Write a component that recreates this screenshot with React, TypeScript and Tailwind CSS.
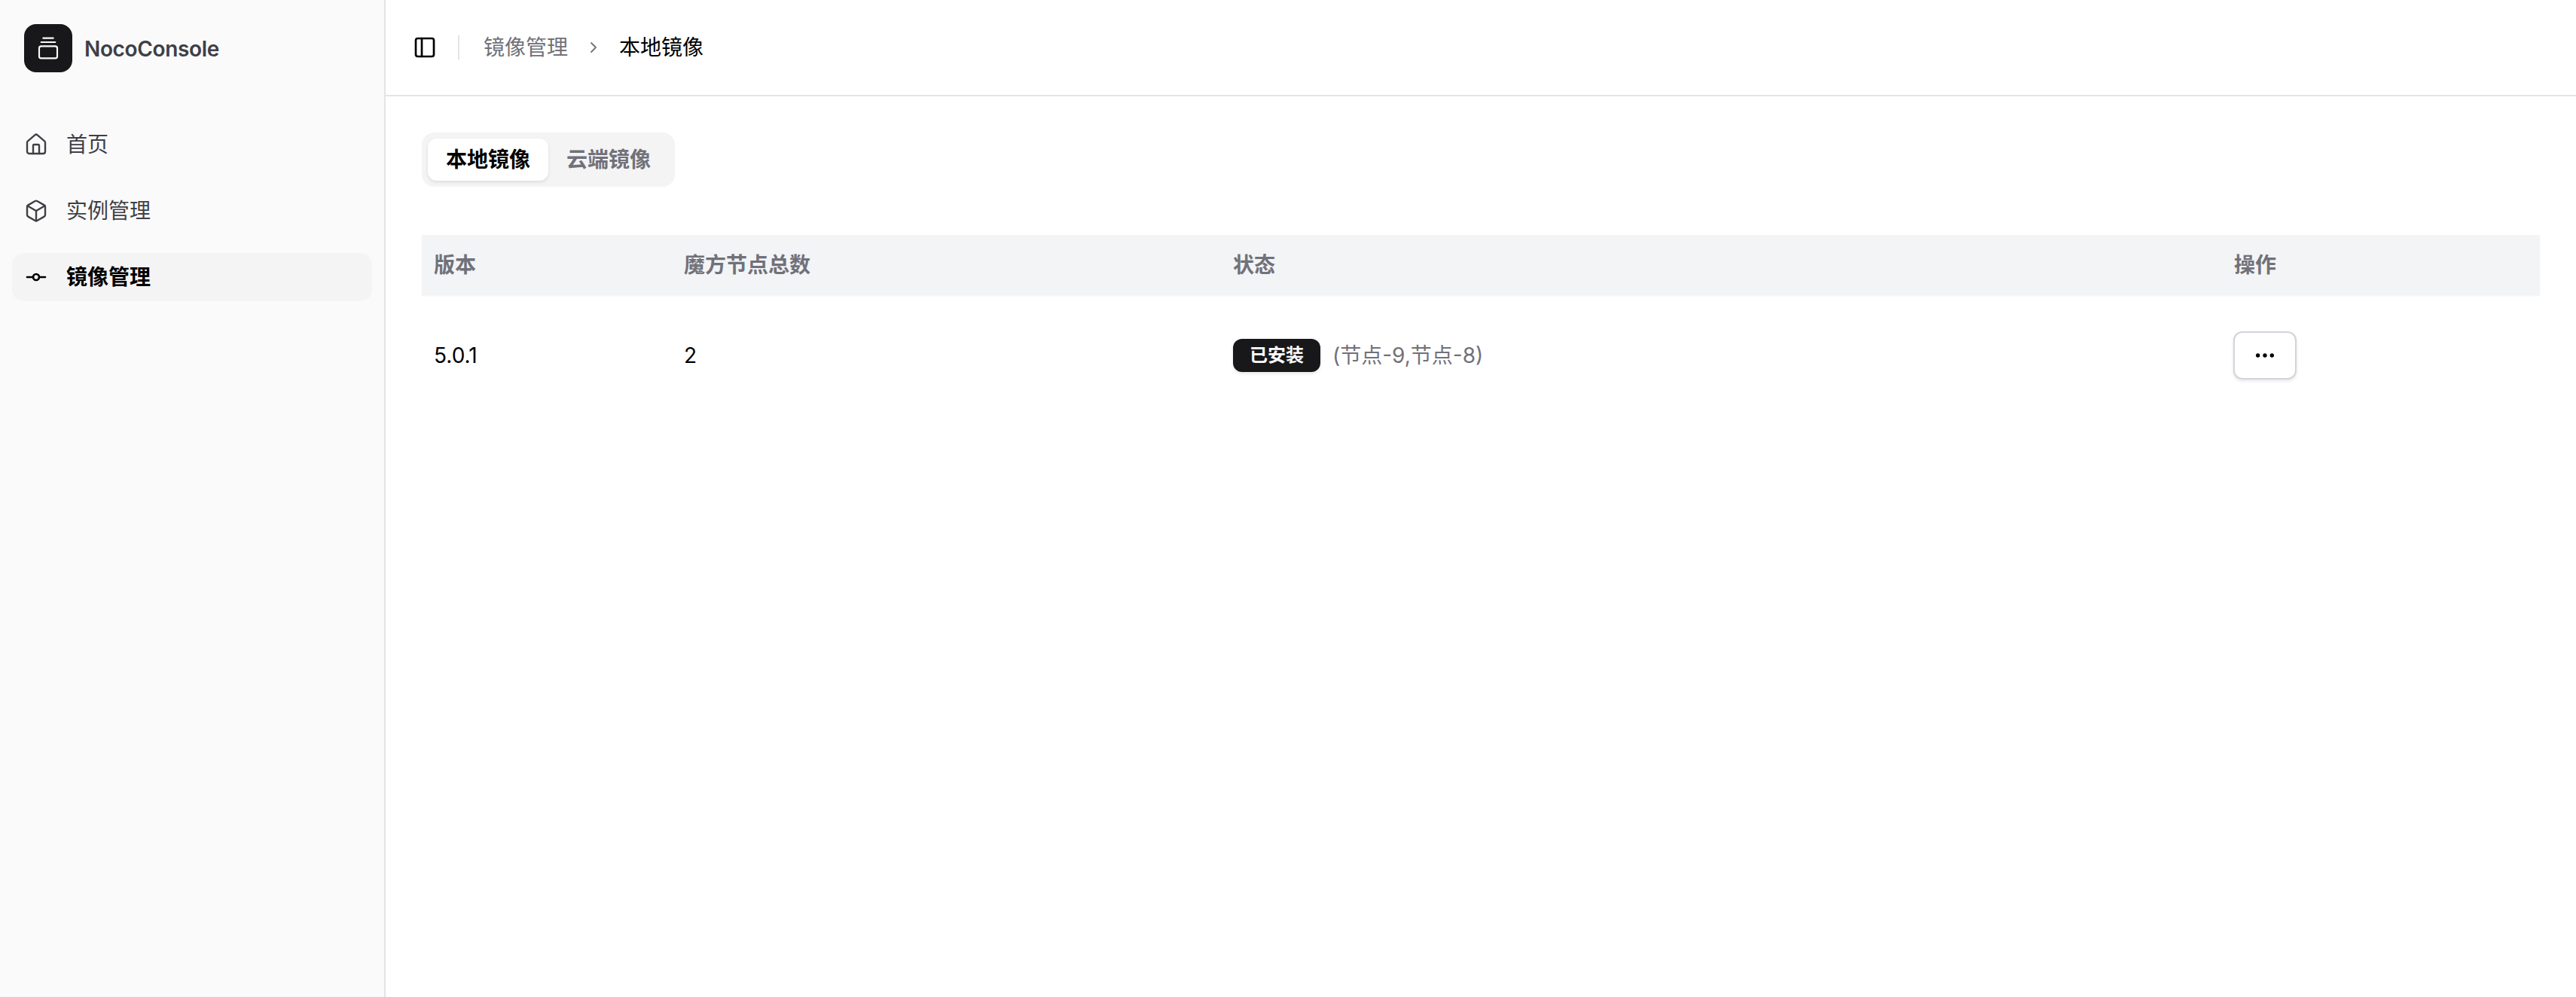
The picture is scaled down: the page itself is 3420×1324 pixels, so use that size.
import { House, Box, GitCommitHorizontal, PanelLeft, ChevronRight, Ellipsis, GalleryVerticalEnd } from "lucide-react";

const font = "font-['Inter','Noto_Sans_CJK_SC',sans-serif]";

function NavItem({ icon, label, active }: { icon: React.ReactNode; label: string; active?: boolean }) {
  return (
    <div className={`flex h-16 items-center gap-6 rounded-2xl px-4 text-[28px] ${active ? "bg-[#f4f4f5] font-semibold text-black" : "text-[#3f3f46]"}`}>
      {icon}
      <span>{label}</span>
    </div>
  );
}

export default function App() {
  return (
    <div className={`${font} flex h-[1324px] w-[3420px] bg-white text-black`}>
      <aside className="flex w-[512px] shrink-0 flex-col border-r-2 border-[#e4e4e7] bg-[#fafafa] px-4 pt-8">
        <div className="flex items-center gap-4 px-4">
          <div className="flex h-16 w-16 items-center justify-center rounded-2xl bg-[#18181b] text-[#fafafa]">
            <GalleryVerticalEnd size={32} strokeWidth={1.6} />
          </div>
          <span className="pt-0.5 text-[28px] font-semibold tracking-[-0.35px] text-[#3f3f46]">NocoConsole</span>
        </div>
        <nav className="mt-16 flex flex-col gap-6">
          <NavItem icon={<House size={32} strokeWidth={1.8} />} label="首页" />
          <NavItem icon={<Box size={32} strokeWidth={1.8} />} label="实例管理" />
          <NavItem active icon={<GitCommitHorizontal size={32} strokeWidth={2} />} label="镜像管理" />
        </nav>
      </aside>
      <main className="flex min-w-0 flex-1 flex-col">
        <header className="flex h-[128px] items-center border-b-2 border-[#e4e4e7] px-9">
          <PanelLeft size={32} strokeWidth={2} />
          <div className="ml-7 h-8 w-0.5 bg-[#e4e4e7]" />
          <span className="ml-8 text-[28px] text-[#71717a]">镜像管理</span>
          <ChevronRight size={24} strokeWidth={1.8} className="ml-[22px] text-[#71717a]" />
          <span className="ml-[22px] text-[28px] text-black">本地镜像</span>
        </header>
        <div className="flex flex-col px-12 pt-12">
          <div className="flex h-[72px] w-[336px] items-center rounded-2xl bg-[#f4f4f5] p-2">
            <div className="flex h-14 w-40 items-center justify-center rounded-xl bg-white text-[28px] font-semibold text-black shadow-[0_2px_4px_rgba(0,0,0,0.1)]">本地镜像</div>
            <div className="flex h-14 w-40 items-center justify-center text-[28px] font-semibold text-[#71717a]">云端镜像</div>
          </div>
          <div className="mt-16 w-[2812px]">
            <div className="grid h-20 grid-cols-[332px_729px_1329px_422px] items-center bg-[#f3f4f6] text-[28px] font-semibold text-[#71717a] shadow-[0_1px_2px_rgba(0,0,0,0.05)]">
              <div className="pl-4">版本</div>
              <div className="pl-4">魔方节点总数</div>
              <div className="pl-4">状态</div>
              <div className="pl-4">操作</div>
            </div>
            <div className="grid h-[160px] grid-cols-[332px_729px_1329px_422px] items-center text-[28px]">
              <div className="pl-4">5.0.1</div>
              <div className="pl-4">2</div>
              <div className="flex items-center pl-4">
                <span className="flex h-11 w-[116px] items-center justify-center rounded-xl bg-[#18181b] text-[24px] font-semibold text-[#fafafa] shadow-[0_2px_4px_rgba(0,0,0,0.1)]">已安装</span>
                <span className="ml-4 text-[#71717a]">(节点-9,节点-8)</span>
              </div>
              <div className="pl-4">
                <button className="flex h-16 w-[84px] -translate-x-px items-center justify-center rounded-xl border-2 border-[#d1d5db] bg-white shadow-[0_2px_4px_rgba(0,0,0,0.1)]">
                  <Ellipsis size={32} strokeWidth={2} />
                </button>
              </div>
            </div>
          </div>
        </div>
      </main>
    </div>
  );
}
